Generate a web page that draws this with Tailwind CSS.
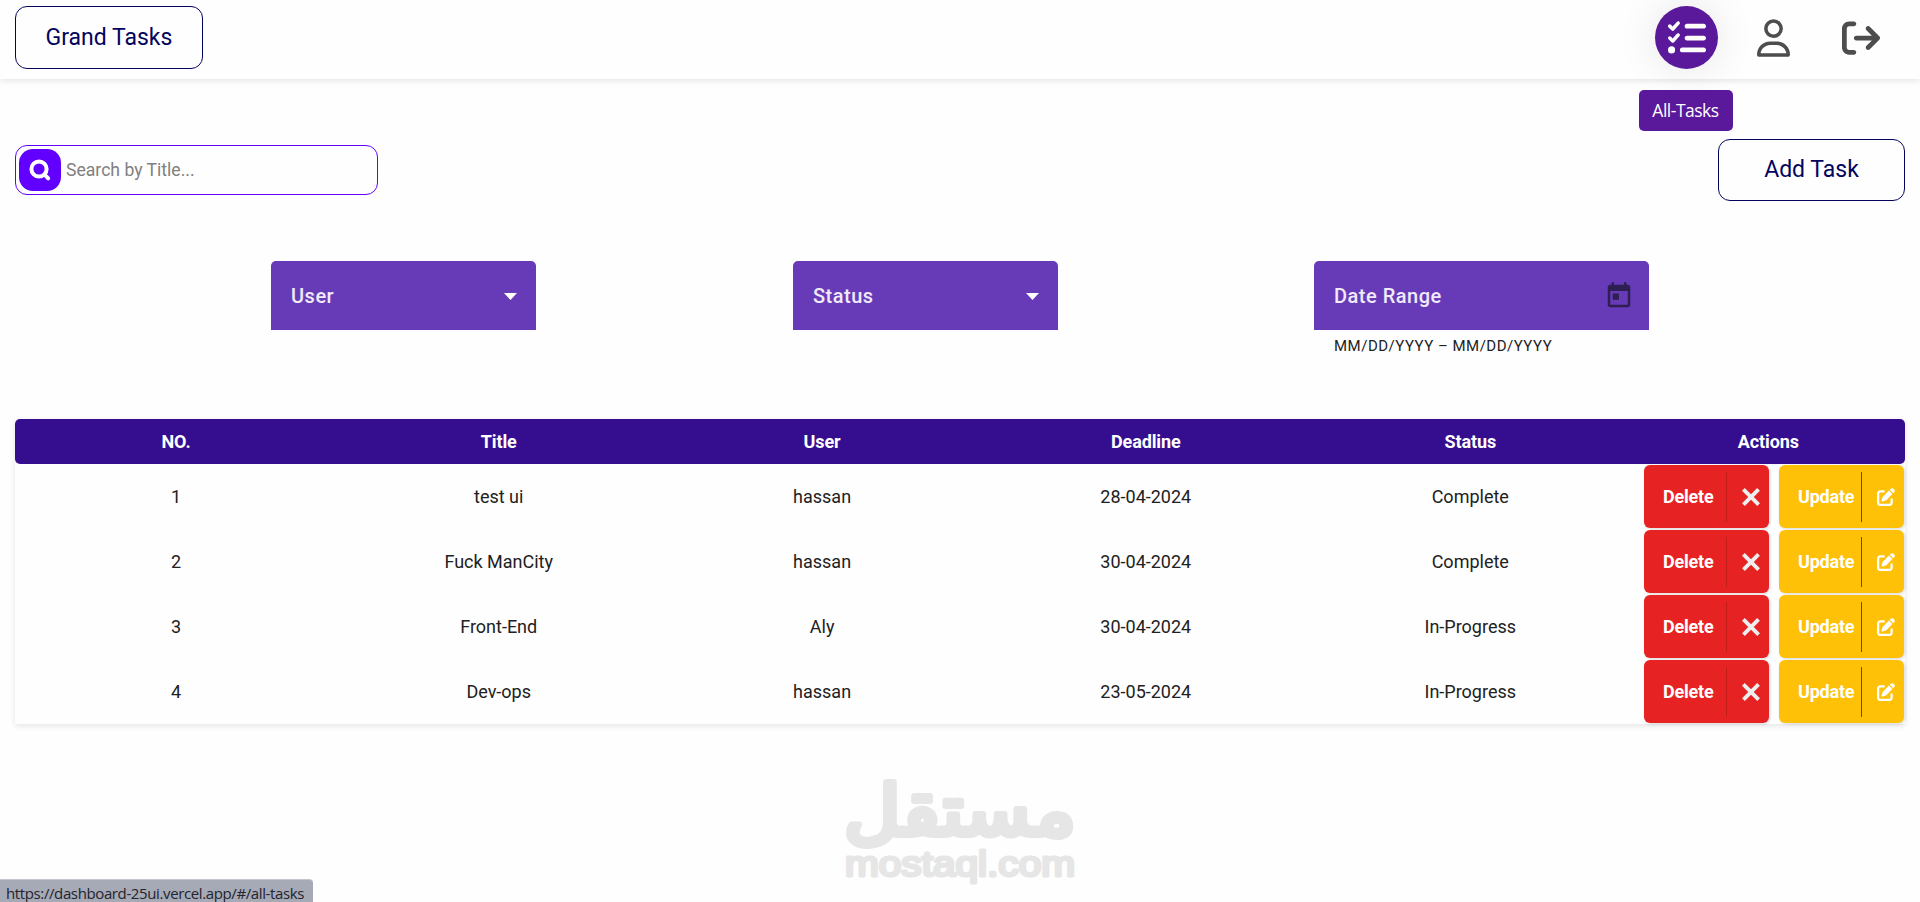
<!DOCTYPE html>
<html lang="en">
<head>
  <meta charset="UTF-8" />
  <meta name="viewport" content="width=device-width, initial-scale=1.0"/>
  <title>Grand Tasks</title>
  <script src="https://cdn.jsdelivr.net/npm/@tailwindcss/browser@4"></script>
</head>
<body class="h-[902px] overflow-hidden bg-[#fefefe] font-[Roboto,sans-serif] text-[#212121]">

  <!-- Header -->
  <header class="flex h-[79px] items-start justify-between bg-[#fefefe] pt-[6px] pr-[28px] pl-[15px] shadow-[0_2px_6px_rgba(0,0,0,0.1)]">
    <a href="#" class="flex h-[63px] w-[188px] items-center justify-center rounded-xl border border-[#03045e] pt-[2px] text-[23px] text-[#03045e]">Grand Tasks</a>
    <nav class="flex items-center gap-6">
      <a href="#/all-tasks" class="relative flex size-[63px] items-center justify-center rounded-full bg-[#5a189a] text-white shadow-[0_0_40px_rgba(0,0,0,0.1)]">
        <svg class="size-[38px]" viewBox="0 0 512 512" fill="currentColor"><path d="M152.1 38.2c9.9 8.9 10.7 24 1.8 33.9l-72 80c-4.4 4.9-10.6 7.8-17.2 7.9s-12.9-2.4-17.6-7L7 113C-2.3 103.6-2.3 88.4 7 79s24.6-9.4 33.9 0l22.1 22.1 55.1-61.2c8.9-9.9 24-10.7 33.9-1.8zm0 160c9.9 8.9 10.7 24 1.8 33.9l-72 80c-4.4 4.9-10.6 7.8-17.2 7.9s-12.9-2.4-17.6-7L7 273c-9.4-9.4-9.4-24.6 0-33.9s24.6-9.4 33.9 0l22.1 22.1 55.1-61.2c8.9-9.9 24-10.7 33.9-1.8zM224 96c0-17.7 14.3-32 32-32l224 0c17.7 0 32 14.3 32 32s-14.3 32-32 32l-224 0c-17.7 0-32-14.3-32-32zm0 160c0-17.7 14.3-32 32-32l224 0c17.7 0 32 14.3 32 32s-14.3 32-32 32l-224 0c-17.7 0-32-14.3-32-32zM160 416c0-17.7 14.3-32 32-32l288 0c17.7 0 32 14.3 32 32s-14.3 32-32 32l-288 0c-17.7 0-32-14.3-32-32zM48 368a48 48 0 1 1 0 96 48 48 0 1 1 0-96z"/></svg>
        <span class="absolute top-[84px] -left-4 flex h-[41px] w-[94px] items-center justify-center rounded-[5px] bg-[#5a189a] pr-px font-['Open_Sans',sans-serif] text-[17.5px] tracking-[-0.5px] whitespace-nowrap">All-Tasks</span>
      </a>
      <a href="#/users" class="flex size-[63px] items-center justify-center text-[#4d4d4d]">
        <svg class="h-[38px] w-[33px]" viewBox="0 0 448 512" fill="currentColor"><path d="M304 128a80 80 0 1 0 -160 0 80 80 0 1 0 160 0zM96 128a128 128 0 1 1 256 0A128 128 0 1 1 96 128zM49.3 464l349.5 0c-8.9-63.3-63.3-112-129-112l-91.4 0c-65.7 0-120.1 48.7-129 112zM0 482.3C0 383.8 79.8 304 178.3 304l91.4 0C368.2 304 448 383.8 448 482.3c0 16.4-13.3 29.7-29.7 29.7L29.7 512C13.3 512 0 498.7 0 482.3z"/></svg>
      </a>
      <a href="#/logout" class="flex size-[63px] items-center justify-center text-[#4d4d4d]">
        <svg class="size-[38px]" viewBox="0 0 512 512" fill="currentColor"><path d="M502.6 278.6c12.5-12.5 12.5-32.8 0-45.3l-128-128c-12.5-12.5-32.8-12.5-45.3 0s-12.5 32.8 0 45.3L402.7 224 192 224c-17.7 0-32 14.3-32 32s14.3 32 32 32l210.7 0-73.4 73.4c-12.5 12.5-12.5 32.8 0 45.3s32.8 12.5 45.3 0l128-128zM160 96c17.7 0 32-14.3 32-32s-14.3-32-32-32L96 32C43 32 0 75 0 128L0 384c0 53 43 96 96 96l64 0c17.7 0 32-14.3 32-32s-14.3-32-32-32l-64 0c-17.7 0-32-14.3-32-32l0-256c0-17.7 14.3-32 32-32l64 0z"/></svg>
      </a>
    </nav>
  </header>

  <main class="px-[15px] pt-[60px]">
    <!-- Search + add -->
    <div class="flex h-[62px] items-center justify-between">
      <label class="flex h-[50px] w-[363px] items-center gap-[5px] rounded-xl border border-[#6200ff] pl-[3px]">
        <span class="flex size-[42px] items-center justify-center rounded-[14px] bg-[#6200ff]">
          <svg class="size-[42px]" viewBox="0 0 42 42" fill="none" stroke="#fff" stroke-width="4" stroke-linecap="round"><circle cx="20" cy="20" r="7.6"/><path d="M26 26l3.2 3.4"/></svg>
        </span>
        <input type="text" placeholder="Search by Title..." class="w-[280px] text-[17.6px] outline-none placeholder:text-[#808080]" />
      </label>
      <button class="h-[62px] w-[187px] rounded-xl border border-[#03045e] pt-px text-[23px] text-[#03045e]">Add Task</button>
    </div>

    <!-- Filters -->
    <div class="flex h-[158px] items-start pt-[60px] pl-[256px] text-[20px] font-medium tracking-[0.5px] text-white/90">
      <div class="flex h-[69px] w-[265px] items-center justify-between rounded-t-[5px] bg-[#673ab7] pr-[19px] pl-5">
        <span>User</span>
        <svg class="mt-[2px] h-[7px] w-[13px]" viewBox="0 0 13 7" fill="#fff"><path d="M0 0h13L6.500 7z"/></svg>
      </div>
      <div class="ml-[257px] flex h-[69px] w-[265px] items-center justify-between rounded-t-[5px] bg-[#673ab7] pr-[19px] pl-5">
        <span>Status</span>
        <svg class="mt-[2px] h-[7px] w-[13px]" viewBox="0 0 13 7" fill="#fff"><path d="M0 0h13L6.500 7z"/></svg>
      </div>
      <div class="ml-[256px] w-[335px]">
        <div class="flex h-[69px] items-center justify-between rounded-t-[5px] bg-[#673ab7] pr-[15px] pl-5">
          <span>Date Range</span>
          <svg class="size-[30px]" viewBox="0 0 24 24" fill="#2e1f52"><path d="M19 3h-1V1h-2v2H8V1H6v2H5c-1.110 0-1.990.9-1.990 2L3 19c0 1.100.890 2 2 2h14c1.100 0 2-.9 2-2V5c0-1.100-.9-2-2-2zm0 16H5V8h14v11zM7 10h5v5H7z"/></svg>
        </div>
        <p class="pt-[5px] pl-5 text-[15px] leading-[22px] font-normal text-[#212121]">MM/DD/YYYY – MM/DD/YYYY</p>
      </div>
    </div>

    <!-- Tasks table -->
    <div class="mt-[60px] text-center text-[18px] shadow-[0_2px_6px_rgba(0,0,0,0.1)]">
      <div class="grid h-[45px] grid-cols-[322px_323.4px_323.4px_324px_325px_1fr] items-center rounded-[5px] bg-[#340e8f] font-bold tracking-[-0.1px] text-white">
        <div>NO.</div>
        <div>Title</div>
        <div>User</div>
        <div>Deadline</div>
        <div>Status</div>
        <div class="pr-px">Actions</div>
      </div>
      <div id="tasks"></div>
    </div>
  </main>

  <!-- Watermark -->
  <svg class="absolute top-[770px] left-[840px] h-[120px] w-[240px] overflow-visible" viewBox="0 0 240 120" fill="#e6e6e6" stroke="#e6e6e6" stroke-linejoin="round">
    <text x="120" y="65" text-anchor="middle" direction="rtl" font-family="DejaVu Sans, sans-serif" font-size="70" stroke-width="6" textLength="232" lengthAdjust="spacingAndGlyphs">مستقل</text>
    <text x="5" y="105.500" font-family="Liberation Sans, sans-serif" font-size="35" stroke-width="3" textLength="230" lengthAdjust="spacingAndGlyphs">mostaql.com</text>
  </svg>

  <!-- Link status -->
  <div class="absolute bottom-0 left-0 flex h-[23px] w-[313px] items-center rounded-tr-[4px] border-t border-[#c3c5cf] bg-[#a6a9b6] pt-[5px] pl-[6px] font-['Open_Sans',sans-serif] text-[15px] tracking-[-0.38px] whitespace-nowrap text-[#24242c]">https://dashboard-25ui.vercel.app/#/all-tasks</div>

  <script>
    const tasks = [
      { title: 'test ui', user: 'hassan', deadline: '28-04-2024', status: 'Complete' },
      { title: 'Fuck ManCity', user: 'hassan', deadline: '30-04-2024', status: 'Complete' },
      { title: 'Front-End', user: 'Aly', deadline: '30-04-2024', status: 'In-Progress' },
      { title: 'Dev-ops', user: 'hassan', deadline: '23-05-2024', status: 'In-Progress' },
    ];

    document.getElementById('tasks').innerHTML = tasks.map((task, i) => `
      <div class="grid h-[65px] grid-cols-[322px_323.4px_323.4px_324px_325px_1fr] items-center">
        <div>${i + 1}</div>
        <div>${task.title}</div>
        <div>${task.user}</div>
        <div>${task.deadline}</div>
        <div>${task.status}</div>
        <div class="flex justify-end gap-[10px] pr-px font-bold tracking-[-0.2px] text-white">
          <button class="flex h-[63px] w-[125px] items-center rounded-[6px] bg-[#e62222] pl-[19px] shadow-[1px_1px_3px_rgba(0,0,0,0.15)]">
            <span class="w-[63px] text-left">Delete</span>
            <span class="flex h-[50px] w-[42px] items-center border-l border-[#c41b1b] pl-[15px]">
              <svg class="size-[18px]" viewBox="0 0 24 24" fill="#eee"><path d="M24 20.188l-8.315-8.209 8.2-8.282-3.697-3.697-8.212 8.318-8.310-8.203-3.666 3.666 8.321 8.240-8.206 8.313 3.666 3.666 8.237-8.318 8.285 8.203z"/></svg>
            </span>
          </button>
          <button class="flex h-[63px] w-[125px] items-center rounded-[6px] bg-[#ffc107] pl-[19px] shadow-[1px_1px_3px_rgba(0,0,0,0.15)]">
            <span class="w-[63px] text-left">Update</span>
            <span class="flex h-[50px] w-[42px] items-center border-l border-[#c41b1b] pl-[15px]">
              <svg class="size-[18px]" viewBox="0 0 512 512" fill="#fff"><path d="M471.6 21.7c-21.9-21.9-57.3-21.9-79.2 0L362.3 51.7l97.9 97.9 30.1-30.1c21.9-21.9 21.9-57.3 0-79.2L471.6 21.7zm-299.2 220c-6.1 6.1-10.8 13.6-13.5 21.9l-29.6 88.8c-2.9 8.6-.6 18.1 5.8 24.6s15.9 8.7 24.6 5.8l88.8-29.6c8.2-2.7 15.7-7.4 21.9-13.5L437.7 172.3 339.7 74.3 172.4 241.7zM96 64C43 64 0 107 0 160L0 416c0 53 43 96 96 96l256 0c53 0 96-43 96-96l0-96c0-17.7-14.3-32-32-32s-32 14.3-32 32l0 96c0 17.7-14.3 32-32 32L96 448c-17.7 0-32-14.3-32-32l0-256c0-17.7 14.3-32 32-32l96 0c17.7 0 32-14.3 32-32s-14.3-32-32-32L96 64z"/></svg>
            </span>
          </button>
        </div>
      </div>
    `).join('');
  </script>

</body>
</html>
